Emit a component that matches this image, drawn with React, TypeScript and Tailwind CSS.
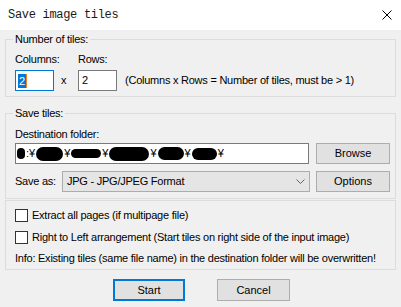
import React from 'react'

const Blob = ({ w, h }: { w: number; h: number }) => (
  <span className="inline-block bg-black rounded-full" style={{ width: w, height: h }} />
)

export default function App() {
  const path: Array<[number, number] | string> = [
    [8, 11], ':¥', [27, 14], '¥', [30, 9], '¥', [40, 14], '¥', [26, 13], '¥', [25, 12], '¥',
  ]

  return (
    <div className="w-[401px] h-[307px] bg-[#f0f0f0] overflow-hidden text-[11px] leading-[13px] text-black tracking-[-0.24px] font-['Liberation_Sans',Arial,sans-serif]">
      {/* Title bar */}
      <div className="h-[30px] bg-white flex items-center justify-between pl-[8px] pr-[9px]">
        <span className="text-[12px] tracking-[-0.3px] text-[#1a1a1a] font-['Liberation_Mono','DejaVu_Sans_Mono',monospace]">
          Save image tiles
        </span>
        <svg width="10" height="10" viewBox="0 0 10 10" className="text-black">
          <path d="M0.5 0.5 L9.5 9.5 M9.5 0.5 L0.5 9.5" stroke="currentColor" strokeWidth="1" />
        </svg>
      </div>

      <div className="px-[5px]">
        {/* Number of tiles */}
        <fieldset className="mt-[3px] border border-[#dcdcdc] pl-[9px] pr-[5px] pt-[7px] pb-[5px]">
          <legend className="-ml-[2px] px-[2px] leading-[13px]">Number of tiles:</legend>
          <div className="flex">
            <span className="w-[63px]">Columns:</span>
            <span>Rows:</span>
          </div>
          <div className="flex items-center mt-[4px]">
            <div className="w-[39px] h-[21px] bg-white border border-[#0078d7] flex items-center pl-[2px]">
              <span className="bg-[#0078d7] text-white leading-[14px] px-[1px]">2</span>
              <span className="w-[1px] h-[14px] bg-[#e8862a]" />
            </div>
            <span className="w-[24px] pl-[7px]">x</span>
            <div className="w-[39px] h-[21px] bg-white border border-[#7a7a7a] flex items-center pl-[3px]">2</div>
            <span className="ml-[8px]">(Columns x Rows = Number of tiles, must be &gt; 1)</span>
          </div>
        </fieldset>

        {/* Save tiles */}
        <fieldset className="mt-[10px] border border-[#dcdcdc] pl-[9px] pr-[5px] pt-[8px] pb-[6px]">
          <legend className="-ml-[2px] px-[2px] leading-[13px]">Save tiles:</legend>
          <div>Destination folder:</div>
          <div className="flex mt-[2px]">
            <div className="w-[294px] h-[21px] bg-white border border-[#7a7a7a] flex items-center pl-[1px] overflow-hidden">
              {path.map((p, i) =>
                typeof p === 'string' ? (
                  <span key={i} className="px-[1px] tracking-normal">{p}</span>
                ) : (
                  <Blob key={i} w={p[0]} h={p[1]} />
                )
              )}
            </div>
            <button className="ml-[7px] w-[74px] h-[21px] bg-[#e1e1e1] border border-[#adadad] tracking-normal">
              Browse
            </button>
          </div>
          <div className="flex items-center mt-[7px]">
            <span className="w-[47px]">Save as:</span>
            <div className="w-[248px] h-[21px] bg-[#e5e5e5] border border-[#acacac] flex items-center justify-between pl-[4px] pr-[4px]">
              <span>JPG - JPG/JPEG Format</span>
              <svg width="9" height="5" viewBox="0 0 9 5">
                <path d="M0.5 0.5 L4.5 4.5 L8.5 0.5" fill="none" stroke="#606060" strokeWidth="1" />
              </svg>
            </div>
            <button className="ml-[6px] w-[74px] h-[21px] bg-[#e1e1e1] border border-[#adadad] tracking-normal">
              Options
            </button>
          </div>
        </fieldset>

        {/* Options */}
        <div className="mt-[1px] h-[70px] border border-[#dcdcdc] pl-[9px] pt-[8px]">
          <label className="flex items-center h-[13px]">
            <span className="w-[13px] h-[13px] bg-white border border-[#333333]" />
            <span className="ml-[4px]">Extract all pages (if multipage file)</span>
          </label>
          <label className="flex items-center h-[13px] mt-[9px]">
            <span className="w-[13px] h-[13px] bg-white border border-[#333333]" />
            <span className="ml-[4px]">Right to Left arrangement (Start tiles on right side of the input image)</span>
          </label>
          <div className="mt-[8px]">
            Info: Existing tiles (same file name) in the destination folder will be overwritten!
          </div>
        </div>
      </div>

      {/* Buttons */}
      <div className="flex mt-[9px] pl-[113px] gap-[32px]">
        <button className="w-[72px] h-[22px] bg-[#e1e1e1] border-2 border-[#0078d7] tracking-normal">Start</button>
        <button className="w-[73px] h-[22px] bg-[#e1e1e1] border border-[#adadad] tracking-normal">Cancel</button>
      </div>
    </div>
  )
}
